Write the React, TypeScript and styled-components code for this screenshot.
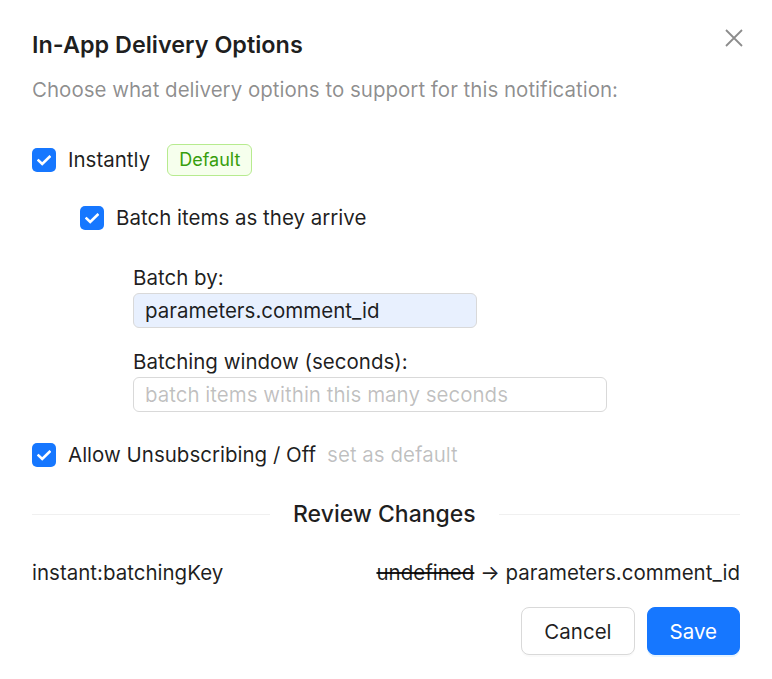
import React from "react";
import styled, { createGlobalStyle } from "styled-components";

const Global = createGlobalStyle`
  html, body { margin: 0; padding: 0; background: #fff; }
  body { font-family: Inter, "Noto Sans", sans-serif; color: rgba(0,0,0,0.88); }
  * { box-sizing: border-box; }
`;

const Modal = styled.div`
  position: relative;
  width: 772px;
  height: 679px;
  padding: 30px 32px 24px 32px;
  display: flex;
  flex-direction: column;
`;

const Close = styled.button`
  position: absolute;
  top: 26px;
  right: 26px;
  width: 24px;
  height: 24px;
  padding: 0;
  border: 0;
  background: none;
  cursor: pointer;
  display: flex;
  align-items: center;
  justify-content: center;
`;

const Title = styled.h2`
  margin: 0;
  font-size: 23.4px;
  font-weight: 600;
  line-height: 30px;
  color: rgba(0,0,0,0.88);
`;

const Subtitle = styled.p`
  margin: 15px 0 0;
  font-size: 20.5px;
  line-height: 30px;
  color: rgba(0,0,0,0.45);
`;

const Row = styled.label<{ $indent?: number; $top: number }>`
  display: flex;
  align-items: center;
  gap: 12px;
  margin: ${(p) => p.$top}px 0 0 ${(p) => p.$indent ?? 0}px;
  font-size: 20.5px;
  line-height: 32px;
  height: 32px;
`;

const Box = styled.span`
  width: 24px;
  height: 24px;
  border-radius: 5px;
  background: #1677ff;
  display: flex;
  align-items: center;
  justify-content: center;
  flex: none;
`;

const Tag = styled.span`
  margin-left: 5px;
  height: 32px;
  padding: 0 11px;
  border: 1px solid #b7eb8f;
  background: #f6ffed;
  color: #389e0d;
  border-radius: 6px;
  font-size: 18px;
  line-height: 30px;
`;

const Hint = styled.span`
  color: rgba(0,0,0,0.25);
  margin-left: -1px;
`;

const Field = styled.div<{ $top: number }>`
  margin: ${(p) => p.$top}px 0 0 101px;
  display: flex;
  flex-direction: column;
  gap: 2px;
`;

const FieldLabel = styled.div`
  font-size: 20.5px;
  line-height: 26px;
`;

const Input = styled.input<{ $w: number; $filled?: boolean }>`
  width: ${(p) => p.$w}px;
  height: 35px;
  padding: 0 11px;
  border: 1px solid #d9d9d9;
  border-radius: 6px;
  font-family: inherit;
  font-size: 20.5px;
  color: rgba(0,0,0,0.88);
  background: ${(p) => (p.$filled ? "#e8f0fe" : "#fff")};
  outline: none;
  &::placeholder { color: rgba(0,0,0,0.25); }
`;

const Divider = styled.div`
  margin-top: 28px;
  display: flex;
  align-items: center;
  gap: 23px;
  font-size: 23px;
  font-weight: 500;
  line-height: 30px;
  &::before, &::after {
    content: "";
    flex: 1;
    height: 1px;
    background: rgba(5,5,5,0.06);
  }
  &::before { flex: 0 0 238px; }
`;

const Change = styled.div`
  margin-top: 29px;
  display: flex;
  justify-content: space-between;
  font-size: 20.5px;
  line-height: 30px;
`;

const Old = styled.s`
  text-decoration: line-through;
`;

const Footer = styled.div`
  margin-top: 19px;
  display: flex;
  justify-content: flex-end;
  gap: 12px;
`;

const Button = styled.button<{ $primary?: boolean }>`
  height: 48px;
  padding: 0 22px;
  border-radius: 8px;
  font-family: inherit;
  font-size: 20.5px;
  cursor: pointer;
  border: 1px solid ${(p) => (p.$primary ? "#1677ff" : "#d9d9d9")};
  background: ${(p) => (p.$primary ? "#1677ff" : "#fff")};
  color: ${(p) => (p.$primary ? "#fff" : "rgba(0,0,0,0.88)")};
  box-shadow: ${(p) => (p.$primary ? "0 2px 0 rgba(5,145,255,0.1)" : "0 2px 0 rgba(0,0,0,0.02)")};
`;

const Check = () => (
  <Box>
    <svg width="14" height="11" viewBox="0 0 14 11" fill="none">
      <path d="M1.5 5.5L5.2 9L12.5 1.8" stroke="#fff" strokeWidth="2.6" strokeLinecap="square" />
    </svg>
  </Box>
);

export default function App() {
  return (
    <>
      <Global />
      <Modal>
        <Close aria-label="Close">
          <svg width="18" height="18" viewBox="0 0 18 18">
            <path d="M1 1L17 17M17 1L1 17" stroke="rgba(0,0,0,0.45)" strokeWidth="1.8" />
          </svg>
        </Close>
        <Title>In-App Delivery Options</Title>
        <Subtitle>Choose what delivery options to support for this notification:</Subtitle>
        <Row $top={39}>
          <Check />
          <span>Instantly</span>
          <Tag>Default</Tag>
        </Row>
        <Row $top={26} $indent={48}>
          <Check />
          <span>Batch items as they arrive</span>
        </Row>
        <Field $top={31}>
          <FieldLabel>Batch by:</FieldLabel>
          <Input $w={344} $filled defaultValue="parameters.comment_id" />
        </Field>
        <Field $top={21}>
          <FieldLabel>Batching window (seconds):</FieldLabel>
          <Input $w={474} placeholder="batch items within this many seconds" />
        </Field>
        <Row $top={27}>
          <Check />
          <span>Allow Unsubscribing / Off</span>
          <Hint>set as default</Hint>
        </Row>
        <Divider>Review Changes</Divider>
        <Change>
          <span>instant:batchingKey</span>
          <span>
            <Old>undefined</Old> → parameters.comment_id
          </span>
        </Change>
        <Footer>
          <Button>Cancel</Button>
          <Button $primary>Save</Button>
        </Footer>
      </Modal>
    </>
  );
}
